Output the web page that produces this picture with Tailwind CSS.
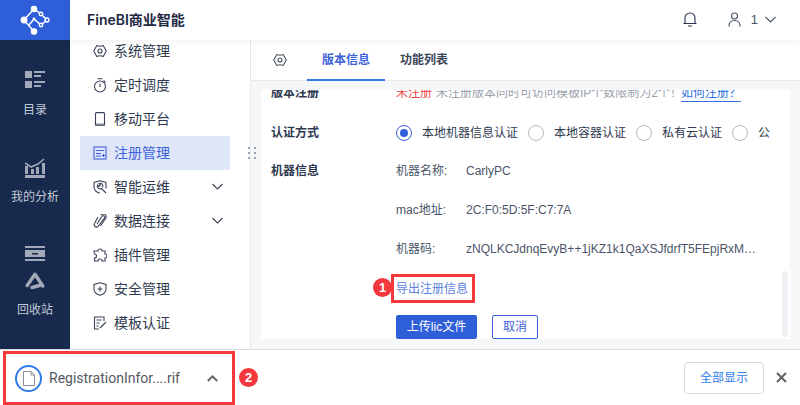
<!DOCTYPE html>
<html><head><meta charset="utf-8">
<script src="https://cdn.jsdelivr.net/npm/@tailwindcss/browser@4"></script>
</head>
<body class="m-0">
<div class="w-[800px] h-[405px] overflow-hidden flex flex-col bg-white text-[#2f3a4f] font-['Liberation_Sans','Noto_Sans_CJK_SC',sans-serif] text-xs">
  <div class="h-[349px] flex shrink-0">
    <!-- navy rail -->
    <aside class="w-[70px] shrink-0 bg-[#172a4e] flex flex-col items-center text-[#c3cad6]">
      <div class="w-full h-10 bg-[#2f5fd8] flex items-center justify-center shrink-0">
        <svg width="30" height="30" viewBox="0 0 30 30" fill="none" stroke="#fff" stroke-width="1.500"><path d="M4 15L14 4L21 9L27 15L21 20L14 14L9 20M4 15L14 26.500"/><circle cx="14" cy="4" r="2.500" fill="#fff"/><circle cx="4" cy="15" r="2.700" fill="#fff"/><circle cx="14" cy="26.500" r="2.500" fill="#fff"/><circle cx="27" cy="15" r="1.900" fill="#2f5fd8"/><circle cx="21" cy="9" r="1.700" fill="#2f5fd8"/><circle cx="21" cy="20" r="1.700" fill="#2f5fd8"/><circle cx="14" cy="14" r="1.400" fill="#fff" stroke="none"/></svg>
      </div>
      <div class="flex flex-col items-center mt-[31px]">
        <svg width="20" height="18" viewBox="0 0 20 18" fill="#a3a9b8"><rect x="0" y="0" width="7" height="7"/><rect x="9" y="0" width="11" height="2"/><rect x="9" y="4" width="7" height="2"/><rect x="0" y="10" width="7" height="7"/><rect x="9" y="10" width="11" height="2"/><rect x="9" y="14" width="7" height="2"/></svg>
        <span class="text-xs leading-5 mt-[11px]">目录</span>
      </div>
      <div class="flex flex-col items-center mt-[38px]">
        <svg width="20" height="20" viewBox="0 0 20 20" fill="#a3a9b8"><path d="M0 5L6 9L13 6L19 1" fill="none" stroke="#a3a9b8" stroke-width="1.600"/><path d="M0 8h3v8h-3zM6 11h3v5h-3zM11 9h3v7h-3zM17 5h3v11h-3zM0 17h20v3h-20z"/></svg>
        <span class="text-xs leading-5 mt-[9px]">我的分析</span>
      </div>
      <div class="flex flex-col items-center mt-[39px]">
        <svg width="20" height="15" viewBox="0 0 20 15" fill="#a3a9b8"><rect x="0" y="0" width="20" height="2"/><path d="M0 4h20v7h-20zM7 7v1.500h6v-1.500z" fill-rule="evenodd"/><rect x="0" y="13" width="20" height="2"/></svg>
        <svg class="mt-[11px]" width="20" height="18" viewBox="0 0 20 18" fill="none" stroke="#a3a9b8" stroke-width="3.400" stroke-linecap="round" stroke-linejoin="round"><path d="M7 15.500L14.500 13.500M17.800 14L10 2.200L2.200 13.500"/></svg>
        <span class="text-xs leading-5 mt-[10px]">回收站</span>
      </div>
    </aside>
    <div class="flex-1 flex flex-col min-w-0">
      <!-- top bar -->
      <header class="h-10 shrink-0 bg-white shadow-[0_2px_6px_rgba(0,0,0,0.05)] relative z-10 flex items-center pl-[17px] pr-[24px]">
        <span class="text-sm font-semibold text-[#1d2740] font-['Inter','Noto_Sans_CJK_SC',sans-serif]">FineBI商业智能</span>
        <div class="ml-auto flex items-center">
          <svg width="14" height="15" viewBox="0 0 14 15" fill="none" stroke="#2a3350" stroke-width="1.100"><path d="M2 11.500V6a5 5 0 0 1 10 0V11.500M0.500 11.500H13.500M5 14H9"/></svg>
          <svg class="ml-[31px]" width="13" height="15" viewBox="0 0 13 15" fill="none" stroke="#4a5468" stroke-width="1.100"><circle cx="6.500" cy="4" r="3"/><path d="M1 14.500C1 10 3.500 8.500 6.500 8.500S12 10 12 14.500"/></svg>
          <span class="ml-[10px] text-[13px] text-[#4a5468]">1</span>
          <svg class="ml-[7px]" width="11" height="7" viewBox="0 0 11 7" fill="none" stroke="#4a5468" stroke-width="1.100"><path d="M0.500 1L5.500 6L10.500 1"/></svg>
        </div>
      </header>
      <div class="flex-1 flex bg-[#f6f7f9] min-h-0">
        <!-- menu -->
        <nav class="w-[180px] shrink-0 bg-white overflow-hidden text-sm text-[#2f3a4f]">
          <div class="-mt-[6px] pl-[10px] flex flex-col">
            <div class="h-[34px] w-[150px] flex items-center pl-[13px] gap-[7px]">
              <svg width="14" height="14" viewBox="0 0 14 14" fill="none" stroke="#3a4358" stroke-width="1.100" stroke-linejoin="round"><path d="M3.800 1.500Q7 3 10.200 1.500L13.300 7L10.200 12.500Q7 11 3.800 12.500L.7 7Z"/><circle cx="7" cy="7" r="2"/></svg><span>系统管理</span></div>
            <div class="h-[34px] w-[150px] flex items-center pl-[13px] gap-[7px]">
              <svg width="14" height="15" viewBox="0 0 14 15" fill="none" stroke="#3a4358" stroke-width="1.100"><circle cx="7" cy="8.500" r="5.500"/><path d="M7 5.500v3.500M4.500 .8H9.500M10.500 2.500l2 2"/></svg><span>定时调度</span></div>
            <div class="h-[34px] w-[150px] flex items-center pl-[13px] gap-[7px]">
              <svg width="14" height="14" viewBox="0 0 14 14" fill="none" stroke="#3a4358" stroke-width="1.100"><rect x="2.500" y=".6" width="9" height="12.800" rx="1"/><path d="M3 11.500h8v2h-8z" fill="#8a919e" stroke="none"/></svg><span>移动平台</span></div>
            <div class="h-[34px] w-[150px] flex items-center pl-[13px] gap-[7px] bg-[#e0e6f9] text-[#3d62d8]">
              <svg width="14" height="14" viewBox="0 0 14 14" fill="none" stroke="#3d62d8" stroke-width="1.100"><rect x="1" y="1" width="12" height="12"/><path d="M3 4.500h8M3 7.500h5M3 10h5M9 9.500h3M10.500 8v3"/></svg><span>注册管理</span></div>
            <div class="h-[34px] w-[150px] flex items-center pl-[13px] gap-[7px] relative">
              <svg width="14" height="14" viewBox="0 0 14 14" fill="none" stroke="#3a4358" stroke-width="1.100"><path d="M7 .7L13 2.500V8.500M7 13.300C3.500 12.300 1 10 1 7V2.500L7 .7"/><path d="M13 13L8.500 8.500M8.500 8.500a2.800 2.800 0 0 1-4-3.500L6 6.500 7.500 5 6 3.500a2.800 2.800 0 0 1 3.500 4"/></svg><span>智能运维</span>
              <svg class="absolute left-[132px] top-[13px]" width="11" height="7" viewBox="0 0 11 7" fill="none" stroke="#3a4358" stroke-width="1.100"><path d="M.5 1L5.500 6L10.500 1"/></svg></div>
            <div class="h-[34px] w-[150px] flex items-center pl-[13px] gap-[7px] relative">
              <svg width="14" height="14" viewBox="0 0 14 14" fill="none" stroke="#3a4358" stroke-width="1.100"><path d="M5 3L1.500 9.500a2.300 2.300 0 0 0 4 2.300L11.500 4a1.500 1.500 0 0 0-2.700-1.500L4 10M8 .8a3 3 0 0 1 5 3L7.500 12"/></svg><span>数据连接</span>
              <svg class="absolute left-[132px] top-[13px]" width="11" height="7" viewBox="0 0 11 7" fill="none" stroke="#3a4358" stroke-width="1.100"><path d="M.5 1L5.500 6L10.500 1"/></svg></div>
            <div class="h-[34px] w-[150px] flex items-center pl-[13px] gap-[7px]">
              <svg width="14" height="14" viewBox="0 0 14 14" fill="none" stroke="#3a4358" stroke-width="1.100"><path d="M5 3a2 2 0 0 1 4 0h3v3a2 2 0 0 1 0 4v3H9a2 2 0 0 0-4 0H1.500V10a2 2 0 0 0 0-4L1 3z"/></svg><span>插件管理</span></div>
            <div class="h-[34px] w-[150px] flex items-center pl-[13px] gap-[7px]">
              <svg width="14" height="14" viewBox="0 0 14 14" fill="none" stroke="#3a4358" stroke-width="1.100"><path d="M7 .7L13 2.500V7c0 3-2.500 5.300-6 6.300C3.500 12.300 1 10 1 7V2.500zM7 4.500v5M4.500 7h5"/></svg><span>安全管理</span></div>
            <div class="h-[34px] w-[150px] flex items-center pl-[13px] gap-[7px]">
              <svg width="14" height="14" viewBox="0 0 14 14" fill="none" stroke="#3a4358" stroke-width="1.100"><path d="M11 5V1H1.500v12H6M3.500 4h5M3.500 7h3M3.500 10h2M7 12l6-6"/></svg><span>模板认证</span></div>
          </div>
        </nav>
        <!-- right side -->
        <div class="flex-1 flex flex-col min-w-0 relative border-l border-[#e6e8ec]">
          <div class="absolute left-[-3px] top-[107px] w-[8px] grid grid-cols-2 gap-x-[3px] gap-y-[3px]">
            <i class="w-[2px] h-[2px] bg-[#9aa3b4]"></i><i class="w-[2px] h-[2px] bg-[#9aa3b4]"></i><i class="w-[2px] h-[2px] bg-[#9aa3b4]"></i><i class="w-[2px] h-[2px] bg-[#9aa3b4]"></i><i class="w-[2px] h-[2px] bg-[#9aa3b4]"></i><i class="w-[2px] h-[2px] bg-[#9aa3b4]"></i>
          </div>
          <div class="h-[41px] shrink-0 bg-white border-b border-[#e6e8ec] flex items-stretch text-xs font-semibold">
            <div class="w-[56px] flex items-center pl-[22px]">
              <svg width="14" height="14" viewBox="0 0 14 14" fill="none" stroke="#4a5468" stroke-width="1.100" stroke-linejoin="round"><path d="M3.800 1.500Q7 3 10.200 1.500L13.300 7L10.200 12.500Q7 11 3.800 12.500L.7 7Z"/><circle cx="7" cy="7" r="2"/></svg>
            </div>
            <div class="w-[78px] flex items-center justify-center text-[#3d62d8] border-b-2 border-[#2f7bea] -mb-px">版本信息</div>
            <div class="ml-[15px] flex items-center text-[#3a4358]">功能列表</div>
          </div>
          <div class="mt-[9px] ml-[10px] mr-[10px] h-[249px] bg-white overflow-hidden relative shrink-0">
            <div class="-mt-[7px] pl-[10px] flex flex-col">
              <div class="flex h-[20px] items-center">
                <span class="w-[125px] font-semibold text-xs">版本注册</span>
                <span class="text-[#f0484a]">未注册</span>
                <span class="ml-1 text-[#9aa0ac]">未注册版本同时可访问模板IP个数限制为2个！</span>
                <span class="-ml-px text-[#2f6fe0] border-b border-[#2f6fe0] leading-4">如何注册？</span>
              </div>
              <div class="flex h-[20px] items-center mt-[20px]">
                <span class="w-[125px] font-semibold text-xs">认证方式</span>
                <span class="w-4 h-4 rounded-full border border-[#3d62d8] flex items-center justify-center"><i class="w-2 h-2 rounded-full bg-[#2f5fd8]"></i></span>
                <span class="ml-[10px]">本地机器信息认证</span>
                <span class="ml-[10px] w-4 h-4 rounded-full border border-[#b4b8c2]"></span>
                <span class="ml-[10px]">本地容器认证</span>
                <span class="ml-[10px] w-4 h-4 rounded-full border border-[#b4b8c2]"></span>
                <span class="ml-[10px]">私有云认证</span>
                <span class="ml-[10px] w-4 h-4 rounded-full border border-[#b4b8c2]"></span>
                <span class="ml-[10px]">公</span>
              </div>
              <div class="flex h-[20px] items-center mt-[18px]">
                <span class="w-[125px] font-semibold text-xs">机器信息</span>
                <span class="w-[70px] text-[#4a5468]">机器名称:</span><span class="text-[#4a5468]">CarlyPC</span>
              </div>
              <div class="flex h-[20px] items-center mt-[19px] pl-[125px] text-[#4a5468]">
                <span class="w-[70px]">mac地址:</span><span>2C:F0:5D:5F:C7:7A</span>
              </div>
              <div class="flex h-[20px] items-center mt-[19px] pl-[125px] text-[#4a5468]">
                <span class="w-[70px]">机器码:</span><span>zNQLKCJdnqEvyB++1jKZ1k1QaXSJfdrfT5FEpjRxM…</span>
              </div>
              <div class="flex h-[29px] items-center mt-[15px] pl-[120px]">
                <span class="relative w-[84px] h-[29px] border-[3px] border-[#f4383c] flex items-center pl-[2px] text-[#5b80dc] whitespace-nowrap">导出注册信息
                  <span class="absolute left-[-21px] top-[1px] w-[19px] h-[19px] rounded-full bg-[#f4383c] text-white font-bold text-[13px] flex items-center justify-center">1</span>
                </span>
              </div>
              <div class="flex items-center mt-[12px] pl-[125px]">
                <span class="w-[81px] h-[24px] rounded-[2px] bg-[#2f5fd8] text-white flex items-center justify-center">上传lic文件</span>
                <span class="ml-[15px] w-[46px] h-[24px] rounded-[2px] border border-[#3d62d8] text-[#3d62d8] flex items-center justify-center">取消</span>
              </div>
            </div>
            <div class="absolute left-[521px] top-[181px] w-[6px] h-[66px] rounded-full bg-[#eef0f3]"></div>
          </div>
        </div>
      </div>
    </div>
  </div>
  <!-- download bar -->
  <footer class="h-[56px] shrink-0 bg-white border-t border-[#d9dade] flex items-center relative">
    <div class="ml-[3px] w-[232px] h-[54px] border-[3px] border-[#f4383c] flex items-center pl-[9px] text-[#55595f] mt-[1px]">
      <span class="w-[27px] h-[27px] rounded-full border-2 border-[#2f7bea] flex items-center justify-center">
        <svg width="12" height="15" viewBox="0 0 12 15" fill="none" stroke="#8a8e94"><path d="M.5.5H8L11.500 4V14.500H.5zM8 .5V4h3.500"/></svg>
      </span>
      <span class="ml-[7px] text-sm font-['Roboto','Noto_Sans',sans-serif]">RegistrationInfor....rif</span>
      <svg class="ml-[27px]" width="11" height="7" viewBox="0 0 11 7" fill="none" stroke="#5f6368" stroke-width="1.800"><path d="M.8 6L5.500 1.300L10.200 6"/></svg>
    </div>
    <span class="ml-[4px] w-[19px] h-[19px] rounded-full bg-[#f4383c] text-white font-bold text-[13px] flex items-center justify-center">2</span>
    <span class="ml-auto w-[80px] h-[32px] rounded-[4px] border border-[#d9dade] text-[#2f7bea] text-xs flex items-center justify-center">全部显示</span>
    <svg class="ml-[12px] mr-[13px]" width="11" height="11" viewBox="0 0 11 11" fill="none" stroke="#5f6368" stroke-width="2"><path d="M1 1L10 10M10 1L1 10"/></svg>
  </footer>
</div>
</body></html>
